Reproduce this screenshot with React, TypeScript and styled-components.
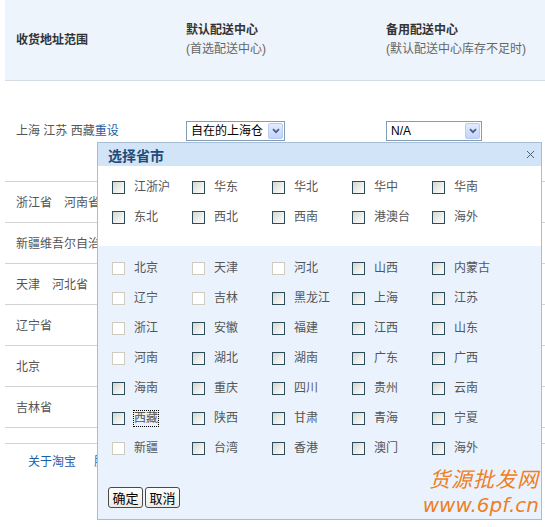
import React from 'react';
import styled, { createGlobalStyle } from 'styled-components';

const GlobalStyle = createGlobalStyle`
  *, *::before, *::after { box-sizing: border-box; }
  html, body { margin: 0; padding: 0; background: #fff; }
  body {
    font-family: "Liberation Sans", "Noto Sans CJK SC", sans-serif;
    font-size: 12px;
    color: #555;
  }
`;

const Page = styled.div`
  position: relative;
  width: 545px;
  height: 527px;
  overflow: hidden;
  padding-left: 5px;
`;

const HeaderRow = styled.div`
  display: grid;
  grid-template-columns: 170px 200px 1fr;
  align-items: center;
  height: 81px;
  padding-left: 11px;
  background: #eef4fb;
  border-bottom: 1px solid #d6dde5;
`;

const HeadCell = styled.div`
  display: flex;
  flex-direction: column;
  line-height: 19px;
`;

const HeadTitle = styled.span`
  font-weight: bold;
  color: #333;
`;

const HeadSub = styled.span`
  color: #666;
`;

const Row = styled.div<{ $h: number; $top: number }>`
  display: grid;
  grid-template-columns: 170px 200px 1fr;
  align-items: start;
  height: ${(p) => p.$h}px;
  padding: ${(p) => p.$top}px 0 0 11px;
  border-bottom: 1px solid #d3d3d3;
  line-height: 20px;
`;

const Spacer = styled.div`
  height: 16px;
  border-bottom: 1px solid #d3d3d3;
`;

const Link = styled.a`
  color: #1d5ca8;
  text-decoration: none;
`;

const Footer = styled.div`
  display: flex;
  gap: 18px;
  padding: 8px 0 0 23px;
  line-height: 20px;
`;

const SelectBox = styled.div<{ $w: number }>`
  width: ${(p) => p.$w}px;
  height: 20px;
  border: 1px solid #7f9db9;
  background: #fff;
  display: flex;
  align-items: center;
  justify-content: space-between;
  padding: 0 1px 0 4px;
  color: #000;
`;

const SelectArrow = styled.span`
  width: 15px;
  height: 16px;
  border: 1px solid #b9cbf1;
  border-radius: 2px;
  background: linear-gradient(#e3ecfe, #c3d4f9);
  display: flex;
  align-items: center;
  justify-content: center;
`;

const Popup = styled.div`
  position: absolute;
  left: 97px;
  top: 142px;
  width: 445px;
  height: 378px;
  border: 1px solid #a8bdd2;
  display: flex;
  flex-direction: column;
  background: #eaf3fd;
`;

const TitleBar = styled.div`
  height: 23px;
  display: flex;
  align-items: center;
  justify-content: space-between;
  padding: 0 6px 0 10px;
  background: #d1e4f8;
`;

const Title = styled.span`
  font-size: 14px;
  font-weight: bold;
  color: #1e4b78;
  font-family: "Noto Sans CJK SC", sans-serif;
`;

const Section = styled.div<{ $bg: string; $pad: string; $grow?: boolean }>`
  background: ${(p) => p.$bg};
  padding: ${(p) => p.$pad};
  flex: ${(p) => (p.$grow ? 1 : 'none')};
`;

const Grid = styled.div`
  display: grid;
  grid-template-columns: repeat(5, 80px);
  grid-auto-rows: 30px;
  margin-left: 4px;
`;

const Cell = styled.label`
  display: flex;
  align-items: center;
`;

const Box = styled.span<{ $off?: boolean }>`
  width: 13px;
  height: 13px;
  flex: none;
  border: 1px solid ${(p) => (p.$off ? '#cfcdc2' : '#2c4c5c')};
  background: ${(p) =>
    p.$off ? '#fff' : 'linear-gradient(135deg, #d6d6d0 0%, #f0f0ec 60%, #fdfdfd 100%)'};
`;

const Name = styled.span<{ $focus?: boolean }>`
  margin-left: 9px;
  color: #555;
  line-height: 15px;
  outline: ${(p) => (p.$focus ? '1px dotted #000' : 'none')};
  outline-offset: 0;
`;

const ButtonBar = styled.div`
  display: flex;
  gap: 2px;
  margin-top: 24px;
`;

const Btn = styled.button`
  width: 35px;
  height: 21px;
  padding: 0;
  border: 1px solid #4a4a4a;
  border-radius: 3px;
  background: linear-gradient(#ffffff, #ecebe6);
  font: 13px "Noto Sans CJK SC", sans-serif;
  color: #000;
  line-height: 19px;
`;

const Watermark = styled.div`
  position: absolute;
  right: 6px;
  bottom: 10px;
  display: flex;
  flex-direction: column;
  align-items: flex-end;
  color: #ef7f22;
  font-style: italic;
  line-height: 24px;
`;

const MarkCn = styled.span`
  font: italic 21px "Noto Sans CJK SC", sans-serif;
  letter-spacing: 1px;
`;

const MarkEn = styled.span`
  font: italic 20px "DejaVu Sans", sans-serif;
`;

type Item = { name: string; off?: boolean; focus?: boolean };

const regions: Item[] = ['江浙沪', '华东', '华北', '华中', '华南', '东北', '西北', '西南', '港澳台', '海外'].map(
  (name) => ({ name })
);

const provinces: Item[] = [
  { name: '北京', off: true }, { name: '天津', off: true }, { name: '河北', off: true }, { name: '山西' }, { name: '内蒙古' },
  { name: '辽宁', off: true }, { name: '吉林', off: true }, { name: '黑龙江' }, { name: '上海' }, { name: '江苏' },
  { name: '浙江', off: true }, { name: '安徽' }, { name: '福建' }, { name: '江西' }, { name: '山东' },
  { name: '河南', off: true }, { name: '湖北' }, { name: '湖南' }, { name: '广东' }, { name: '广西' },
  { name: '海南' }, { name: '重庆' }, { name: '四川' }, { name: '贵州' }, { name: '云南' },
  { name: '西藏', focus: true }, { name: '陕西' }, { name: '甘肃' }, { name: '青海' }, { name: '宁夏' },
  { name: '新疆', off: true }, { name: '台湾' }, { name: '香港' }, { name: '澳门' }, { name: '海外' },
];

const otherRows = ['浙江省　河南省', '新疆维吾尔自治区', '天津　河北省', '辽宁省', '北京', '吉林省'];

function Select({ w, value }: { w: number; value: string }) {
  return (
    <SelectBox $w={w}>
      <span>{value}</span>
      <SelectArrow>
        <svg width="8" height="6" viewBox="0 0 8 6">
          <path d="M1 1.2 L4 4.2 L7 1.2" fill="none" stroke="#4c5f86" strokeWidth="1.8" />
        </svg>
      </SelectArrow>
    </SelectBox>
  );
}

function CheckGrid({ items }: { items: Item[] }) {
  return (
    <Grid>
      {items.map((it, i) => (
        <Cell key={i}>
          <Box $off={it.off} />
          <Name $focus={it.focus}>{it.name}</Name>
        </Cell>
      ))}
    </Grid>
  );
}

export default function App() {
  return (
    <>
      <GlobalStyle />
      <Page>
        <HeaderRow>
          <HeadCell>
            <HeadTitle>收货地址范围</HeadTitle>
          </HeadCell>
          <HeadCell>
            <HeadTitle>默认配送中心</HeadTitle>
            <HeadSub>(首选配送中心)</HeadSub>
          </HeadCell>
          <HeadCell>
            <HeadTitle>备用配送中心</HeadTitle>
            <HeadSub>(默认配送中心库存不足时)</HeadSub>
          </HeadCell>
        </HeaderRow>

        <Row $h={101} $top={40}>
          <span>
            上海 江苏 西藏<Link href="#">重设</Link>
          </span>
          <Select w={99} value="自在的上海仓" />
          <Select w={96} value="N/A" />
        </Row>
        {otherRows.map((t) => (
          <Row key={t} $h={41} $top={11}>
            <span>{t}</span>
          </Row>
        ))}
        <Spacer />
        <Footer>
          <Link href="#">关于淘宝</Link>
          <Link href="#">服务中心</Link>
        </Footer>

        <Popup>
          <TitleBar>
            <Title>选择省市</Title>
            <svg width="9" height="9" viewBox="0 0 9 9">
              <path d="M1 1 L8 8 M8 1 L1 8" stroke="#4b5f77" strokeWidth="1" />
            </svg>
          </TitleBar>
          <Section $bg="#fff" $pad="6px 0 14px 10px">
            <CheckGrid items={regions} />
          </Section>
          <Section $bg="#eaf3fd" $pad="7px 0 0 10px" $grow>
            <CheckGrid items={provinces} />
            <ButtonBar>
              <Btn>确定</Btn>
              <Btn>取消</Btn>
            </ButtonBar>
          </Section>
        </Popup>

        <Watermark>
          <MarkCn>货源批发网</MarkCn>
          <MarkEn>www.6pf.cn</MarkEn>
        </Watermark>
      </Page>
    </>
  );
}
